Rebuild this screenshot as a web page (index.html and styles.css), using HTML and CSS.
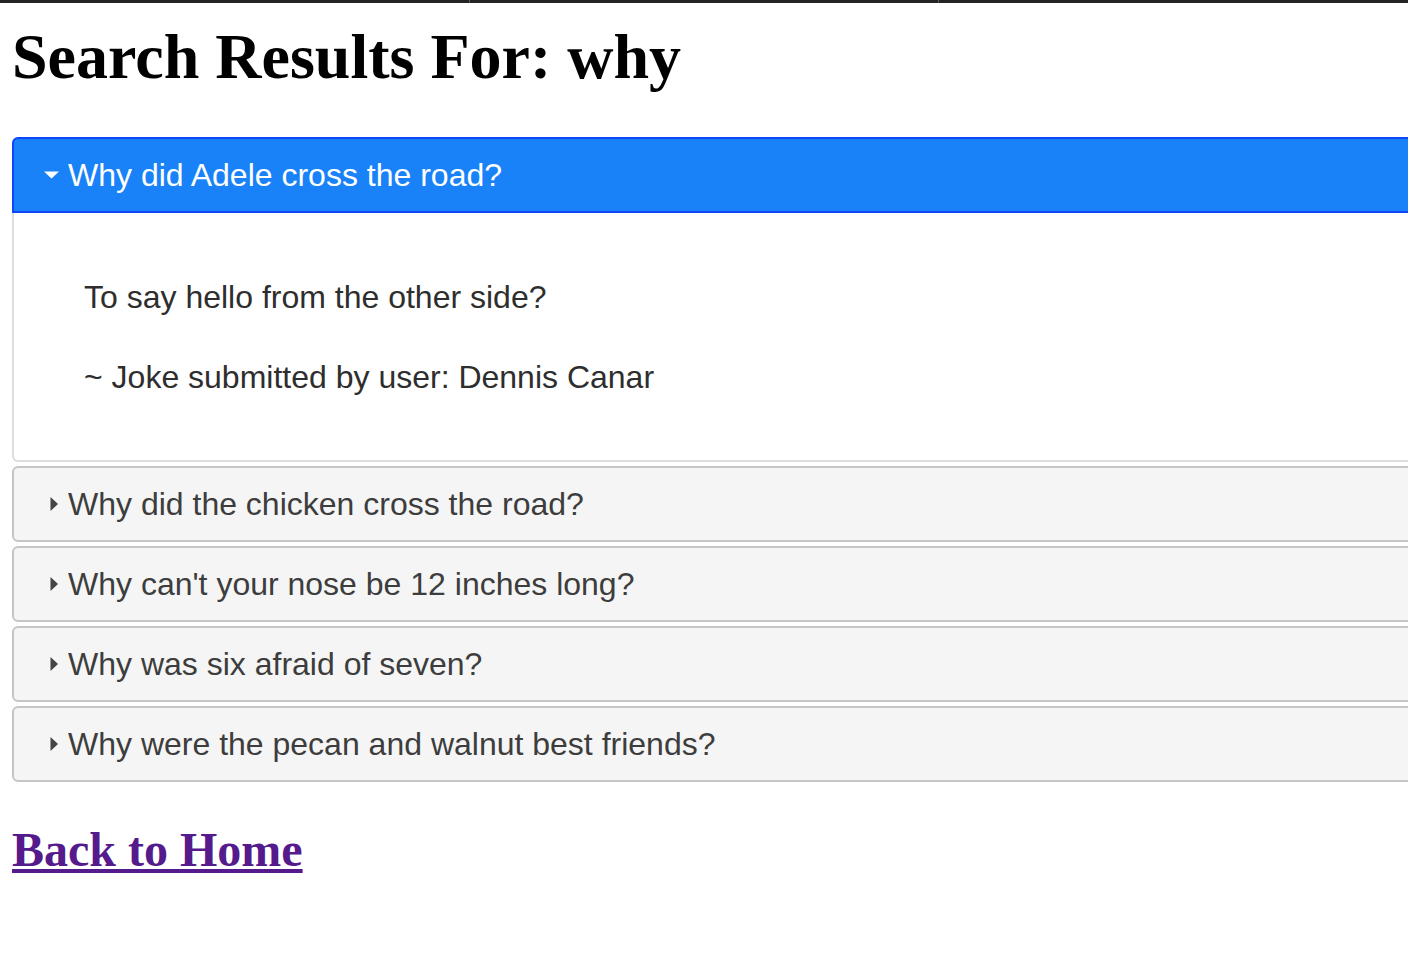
FILE: index.html
```html
<!DOCTYPE html>
<html lang="en">
<head>
<meta charset="utf-8">
<title>Search Results</title>
<link rel="stylesheet" href="styles.css">
</head>
<body>
<div class="topbar"><span></span><span></span><span></span></div>
<main class="page">
  <h1 class="title">Search Results For: why</h1>
  <div class="accordion">
    <h3 class="acc-header active">
      <svg class="icon" width="15" height="8" viewBox="0 0 15 8"><path d="M0 0.5 H15 L7.5 7.5 Z" fill="#ffffff"/></svg>
      Why did Adele cross the road?
    </h3>
    <div class="acc-panel">
      <p>To say hello from the other side?</p>
      <p>~ Joke submitted by user: Dennis Canar</p>
    </div>
    <h3 class="acc-header">
      <svg class="icon" width="8" height="14" viewBox="0 0 8 14"><path d="M0.5 0 V14 L8 7 Z" fill="#454545"/></svg>
      Why did the chicken cross the road?
    </h3>
    <h3 class="acc-header">
      <svg class="icon" width="8" height="14" viewBox="0 0 8 14"><path d="M0.5 0 V14 L8 7 Z" fill="#454545"/></svg>
      Why can't your nose be 12 inches long?
    </h3>
    <h3 class="acc-header">
      <svg class="icon" width="8" height="14" viewBox="0 0 8 14"><path d="M0.5 0 V14 L8 7 Z" fill="#454545"/></svg>
      Why was six afraid of seven?
    </h3>
    <h3 class="acc-header">
      <svg class="icon" width="8" height="14" viewBox="0 0 8 14"><path d="M0.5 0 V14 L8 7 Z" fill="#454545"/></svg>
      Why were the pecan and walnut best friends?
    </h3>
  </div>
  <h2 class="home"><a href="#" class="home-link">Back to Home</a></h2>
</main>
</body>
</html>
```

FILE: styles.css
```css
html {
  overflow-x: hidden;
}

body {
  margin: 0;
  background: #ffffff;
  font-family: "Liberation Serif", "Times New Roman", serif;
  color: #000000;
}

.topbar {
  display: flex;
  height: 3px;
  background: #242424;
}

.topbar span {
  flex: 1;
}

.topbar span + span {
  border-left: 1px solid #5a5a5a;
}

.page {
  padding: 0 0 0 12px;
}

.title {
  font-family: "Liberation Serif", "Times New Roman", serif;
  font-weight: bold;
  font-size: 64px;
  line-height: normal;
  margin: 17px 0 43px 0;
}

.accordion {
  margin-right: -30px;
  font-family: "Liberation Sans", Arial, Helvetica, sans-serif;
}

.acc-header {
  display: flex;
  align-items: center;
  margin: 4px 0 0 0;
  padding: 17px 16px 17px 36px;
  font-size: 32px;
  font-weight: normal;
  line-height: 38px;
  color: #3d3d3d;
  background: #f5f5f5;
  border: 2px solid #c5c5c5;
  border-radius: 6px;
}

.acc-header:first-child {
  margin-top: 0;
}

.acc-header .icon {
  flex: none;
  margin-right: 10px;
}

.acc-header.active {
  padding-left: 30px;
  color: #ffffff;
  background: #1982f8;
  border-color: #0e46fb;
  border-radius: 6px 6px 0 0;
}

.acc-header.active .icon {
  margin-right: 9px;
}

.acc-panel {
  padding: 24px 70px 23px 70px;
  border: 2px solid #dddddd;
  border-top: 0;
  border-radius: 0 0 6px 6px;
  background: #ffffff;
  color: #2e2e2e;
  font-size: 32px;
  line-height: 40px;
}

.acc-panel p {
  margin: 40px 0;
}

.home {
  font-family: "Liberation Serif", "Times New Roman", serif;
  font-weight: bold;
  font-size: 48px;
  line-height: normal;
  margin: 40px 0;
}

.home-link {
  color: #551a8b;
}
```
